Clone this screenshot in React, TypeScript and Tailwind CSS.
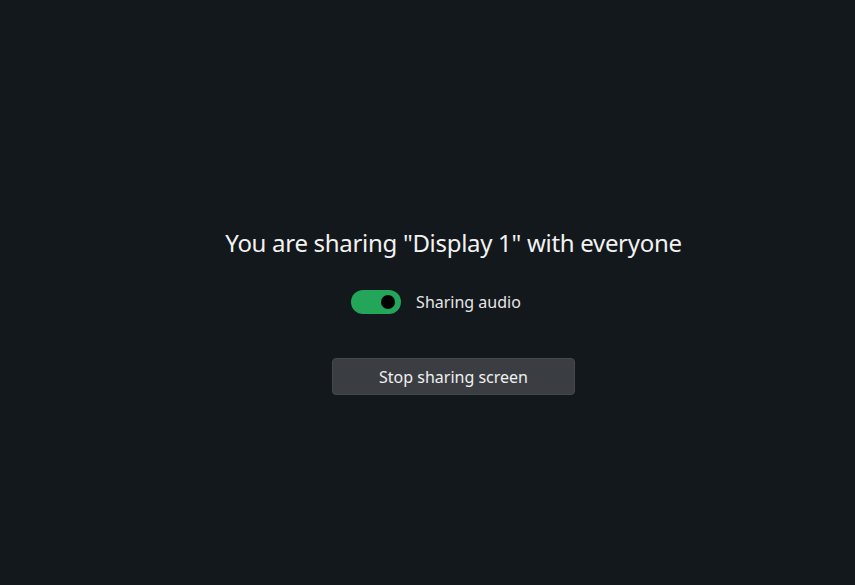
export default function App() {
  return (
    <div
      className="w-[855px] h-[585px] bg-[#13181c] text-[#f2f2f2] flex flex-col items-center justify-center pl-[52px] pt-[38px]"
      style={{ fontFamily: '"Noto Sans", "Open Sans", sans-serif' }}
    >
      <h1 className="text-[24px] leading-[30px] tracking-[-0.3px]">You are sharing "Display 1" with everyone</h1>

      <div className="mt-[32px] mr-[35px] flex items-center gap-[15px]">
        <button className="w-[50px] h-[24px] rounded-full bg-[#23a55a] flex items-center justify-end pr-[6px]">
          <span className="w-[14px] h-[14px] rounded-full bg-black" />
        </button>
        <span className="text-[16px] leading-[22px] text-[#e6e6e6]">Sharing audio</span>
      </div>

      <button className="mt-[44px] w-[243px] h-[37px] rounded-[4px] bg-[#3a3e42] border border-[#45494d] text-[16px] text-[#f0f0f0]">
        Stop sharing screen
      </button>
    </div>
  )
}
